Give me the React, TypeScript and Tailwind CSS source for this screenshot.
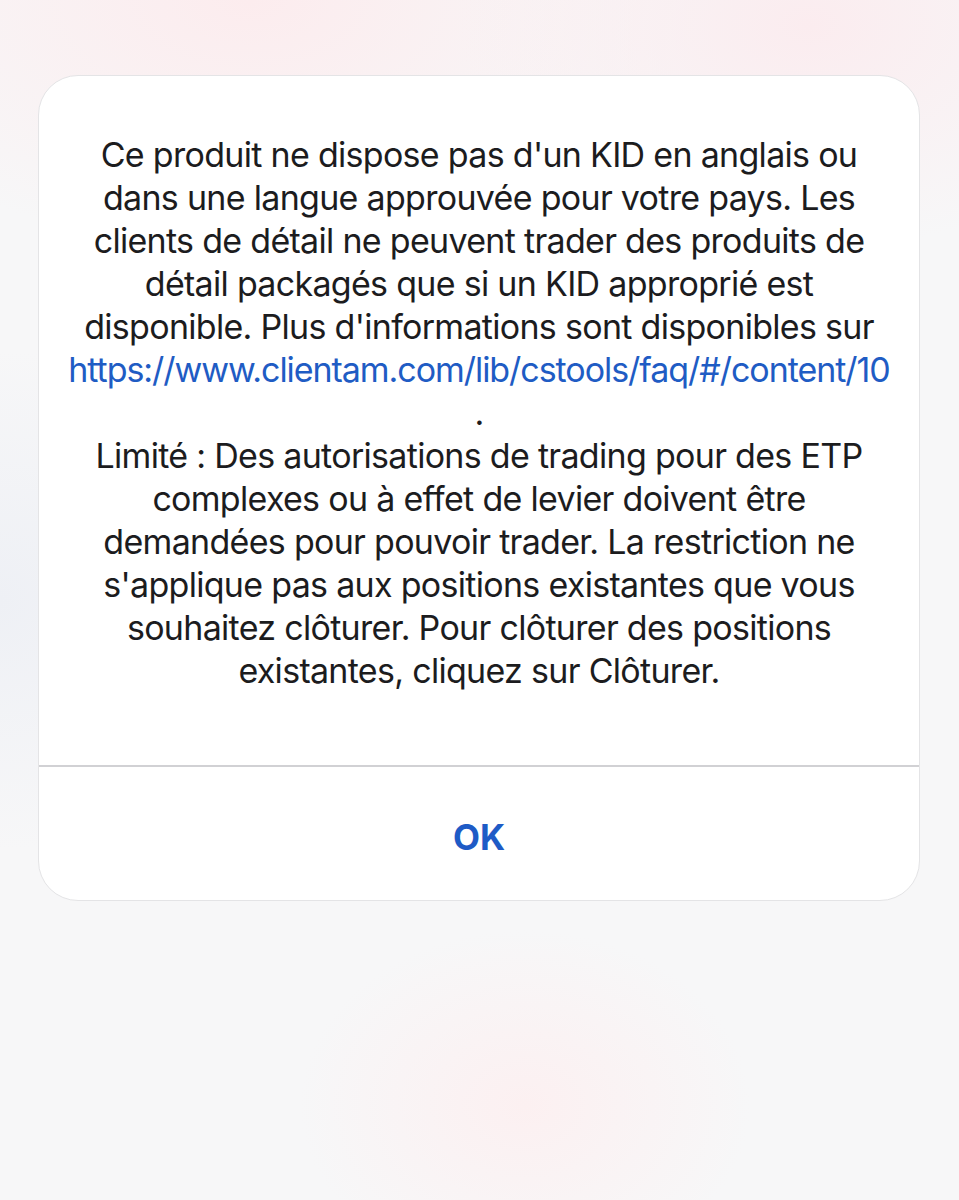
import React from "react";

const lines1 = [
  "Ce produit ne dispose pas d'un KID en anglais ou",
  "dans une langue approuvée pour votre pays. Les",
  "clients de détail ne peuvent trader des produits de",
  "détail packagés que si un KID approprié est",
  "disponible. Plus d'informations sont disponibles sur",
];
const lines2 = [
  "Limité : Des autorisations de trading pour des ETP",
  "complexes ou à effet de levier doivent être",
  "demandées pour pouvoir trader. La restriction ne",
  "s'applique pas aux positions existantes que vous",
  "souhaitez clôturer. Pour clôturer des positions",
  "existantes, cliquez sur Clôturer.",
];

export default function App() {
  return (
    <div
      className="relative w-[959px] h-[1200px] overflow-hidden bg-[#f7f7f8]"
      style={{ fontFamily: "Inter, 'Noto Sans', sans-serif" }}
    >
      <div className="absolute left-[-200px] top-[-250px] w-[900px] h-[500px] bg-[radial-gradient(closest-side,#fcecee,transparent)]" />
      <div className="absolute right-[-200px] top-[-200px] w-[700px] h-[450px] bg-[radial-gradient(closest-side,#fbecef,transparent)]" />
      <div className="absolute left-[300px] top-[930px] w-[450px] h-[350px] bg-[radial-gradient(closest-side,#fcf0f1,transparent)]" />
      <div className="absolute left-[-250px] top-[350px] w-[500px] h-[500px] bg-[radial-gradient(closest-side,#eef0f5,transparent)]" />
      <div className="relative pt-[75px] px-[38px]">
        <div className="w-[882px] h-[826px] rounded-[40px] bg-white border border-[#e4e4e6] flex flex-col overflow-hidden">
          <div className="flex-1 flex flex-col items-center pt-[57px] text-[34px] leading-[43px] text-[#1c1c1e] tracking-[-0.7px]">
            {lines1.map((l) => (
              <div key={l} className="whitespace-nowrap">{l}</div>
            ))}
            <div className="whitespace-nowrap text-[#1f5cc4] tracking-[-1.05px]">https://www.clientam.com/lib/cstools/faq/#/content/10</div>
            <div>.</div>
            {lines2.map((l) => (
              <div key={l} className="whitespace-nowrap">{l}</div>
            ))}
          </div>
          <div className="h-[2px] bg-[#d1d1d4]" />
          <div className="h-[133px] flex items-center justify-center pt-[8px] text-[35px] font-bold text-[#1e5bc6]">
            OK
          </div>
        </div>
      </div>
    </div>
  );
}
